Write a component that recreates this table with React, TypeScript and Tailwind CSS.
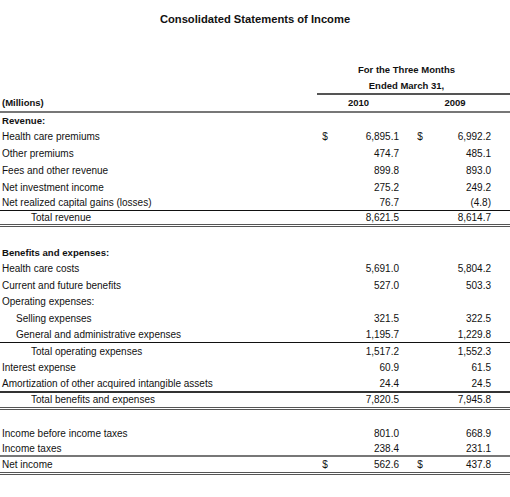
import { FC } from 'react'

type Line = 'none' | 'black' | 'dark' | 'gray' | 'double'

interface Row {
  label: string
  v1?: string
  v2?: string
  dollar?: boolean
  bold?: boolean
  indent?: 0 | 1 | 2
  h: string
  line?: Line
}

const rows: Row[] = [
  { label: 'Revenue:', bold: true, h: 'h-[15px]' },
  { label: 'Health care premiums', v1: '6,895.1', v2: '6,992.2', dollar: true, h: 'h-[17px]' },
  { label: 'Other premiums', v1: '474.7', v2: '485.1', h: 'h-[17px]' },
  { label: 'Fees and other revenue', v1: '899.8', v2: '893.0', h: 'h-[17px]' },
  { label: 'Net investment income', v1: '275.2', v2: '249.2', h: 'h-[17px]' },
  { label: 'Net realized capital gains (losses)', v1: '76.7', v2: '(4.8)', h: 'h-[15px]', line: 'black' },
  { label: 'Total revenue', v1: '8,621.5', v2: '8,614.7', indent: 2, h: 'h-[16px]', line: 'double' },
  { label: '', h: 'h-[17px]' },
  { label: 'Benefits and expenses:', bold: true, h: 'h-[17px]' },
  { label: 'Health care costs', v1: '5,691.0', v2: '5,804.2', h: 'h-[16px]' },
  { label: 'Current and future benefits', v1: '527.0', v2: '503.3', h: 'h-[17px]' },
  { label: 'Operating expenses:', h: 'h-[16px]' },
  { label: 'Selling expenses', v1: '321.5', v2: '322.5', indent: 1, h: 'h-[17px]' },
  { label: 'General and administrative expenses', v1: '1,195.7', v2: '1,229.8', indent: 1, h: 'h-[16px]', line: 'black' },
  { label: 'Total operating expenses', v1: '1,517.2', v2: '1,552.3', indent: 2, h: 'h-[17px]' },
  { label: 'Interest expense', v1: '60.9', v2: '61.5', h: 'h-[16px]' },
  { label: 'Amortization of other acquired intangible assets', v1: '24.4', v2: '24.5', h: 'h-[17px]', line: 'dark' },
  { label: 'Total benefits and expenses', v1: '7,820.5', v2: '7,945.8', indent: 2, h: 'h-[17px]', line: 'double' },
  { label: '', h: 'h-[15px]' },
  { label: 'Income before income taxes', v1: '801.0', v2: '668.9', h: 'h-[17px]' },
  { label: 'Income taxes', v1: '238.4', v2: '231.1', h: 'h-[15px]', line: 'gray' },
  { label: 'Net income', v1: '562.6', v2: '437.8', dollar: true, h: 'h-[18px]', line: 'double' },
]

const lineClass: Record<Line, string> = {
  none: '',
  black: 'border-b-[1.5px] border-[#111]',
  dark: 'border-b-2 border-[#333]',
  gray: 'border-b-2 border-[#777]',
  double: 'border-b-[3px] border-double border-[#555]',
}

const indentClass = ['pl-[2px]', 'pl-[16px]', 'pl-[31px]']

const cols = 'grid grid-cols-[318px_14px_67px_14px_14px_64px_19px] items-center'

const IncomeRow: FC<{ row: Row }> = ({ row }) => (
  <div className={`${cols} ${row.h} ${lineClass[row.line ?? 'none']}`}>
    <div
      className={`${indentClass[row.indent ?? 0]} whitespace-nowrap ${
        row.bold ? 'font-bold text-[9.6px]' : ''
      }`}
    >
      {row.label}
    </div>
    <div className="text-center">{row.dollar ? '$' : ''}</div>
    <div className="text-right">{row.v1}</div>
    <div />
    <div className="text-center">{row.dollar ? '$' : ''}</div>
    <div className="text-right">{row.v2}</div>
    <div />
  </div>
)

export default function App() {
  return (
    <div className="w-[510px] h-[497px] bg-white text-[#111] font-['Liberation_Sans',Arial,sans-serif] text-[10px] leading-none">
      <div className="h-[40px] flex items-center justify-center font-bold text-[11.2px]">
        Consolidated Statements of Income
      </div>
      <div className="mt-[21px] font-bold text-[9.5px]">
        <div className="flex h-[18px] items-center">
          <div className="w-[317px]" />
          <div className="flex-1 text-center pr-[14px]">For the Three Months</div>
        </div>
        <div className="flex h-[16px]">
          <div className="w-[317px]" />
          <div className="flex-1 flex items-center justify-center pr-[14px] border-b-2 border-[#555]">
            Ended March 31,
          </div>
        </div>
        <div className={`${cols} h-[18px] border-b-2 border-[#777]`}>
          <div className="pl-[2px]">(Millions)</div>
          <div className="col-span-2 text-center">2010</div>
          <div />
          <div className="col-span-2 text-center pl-[6px]">2009</div>
          <div />
        </div>
      </div>
      {rows.map((row, i) => (
        <IncomeRow key={i} row={row} />
      ))}
    </div>
  )
}
